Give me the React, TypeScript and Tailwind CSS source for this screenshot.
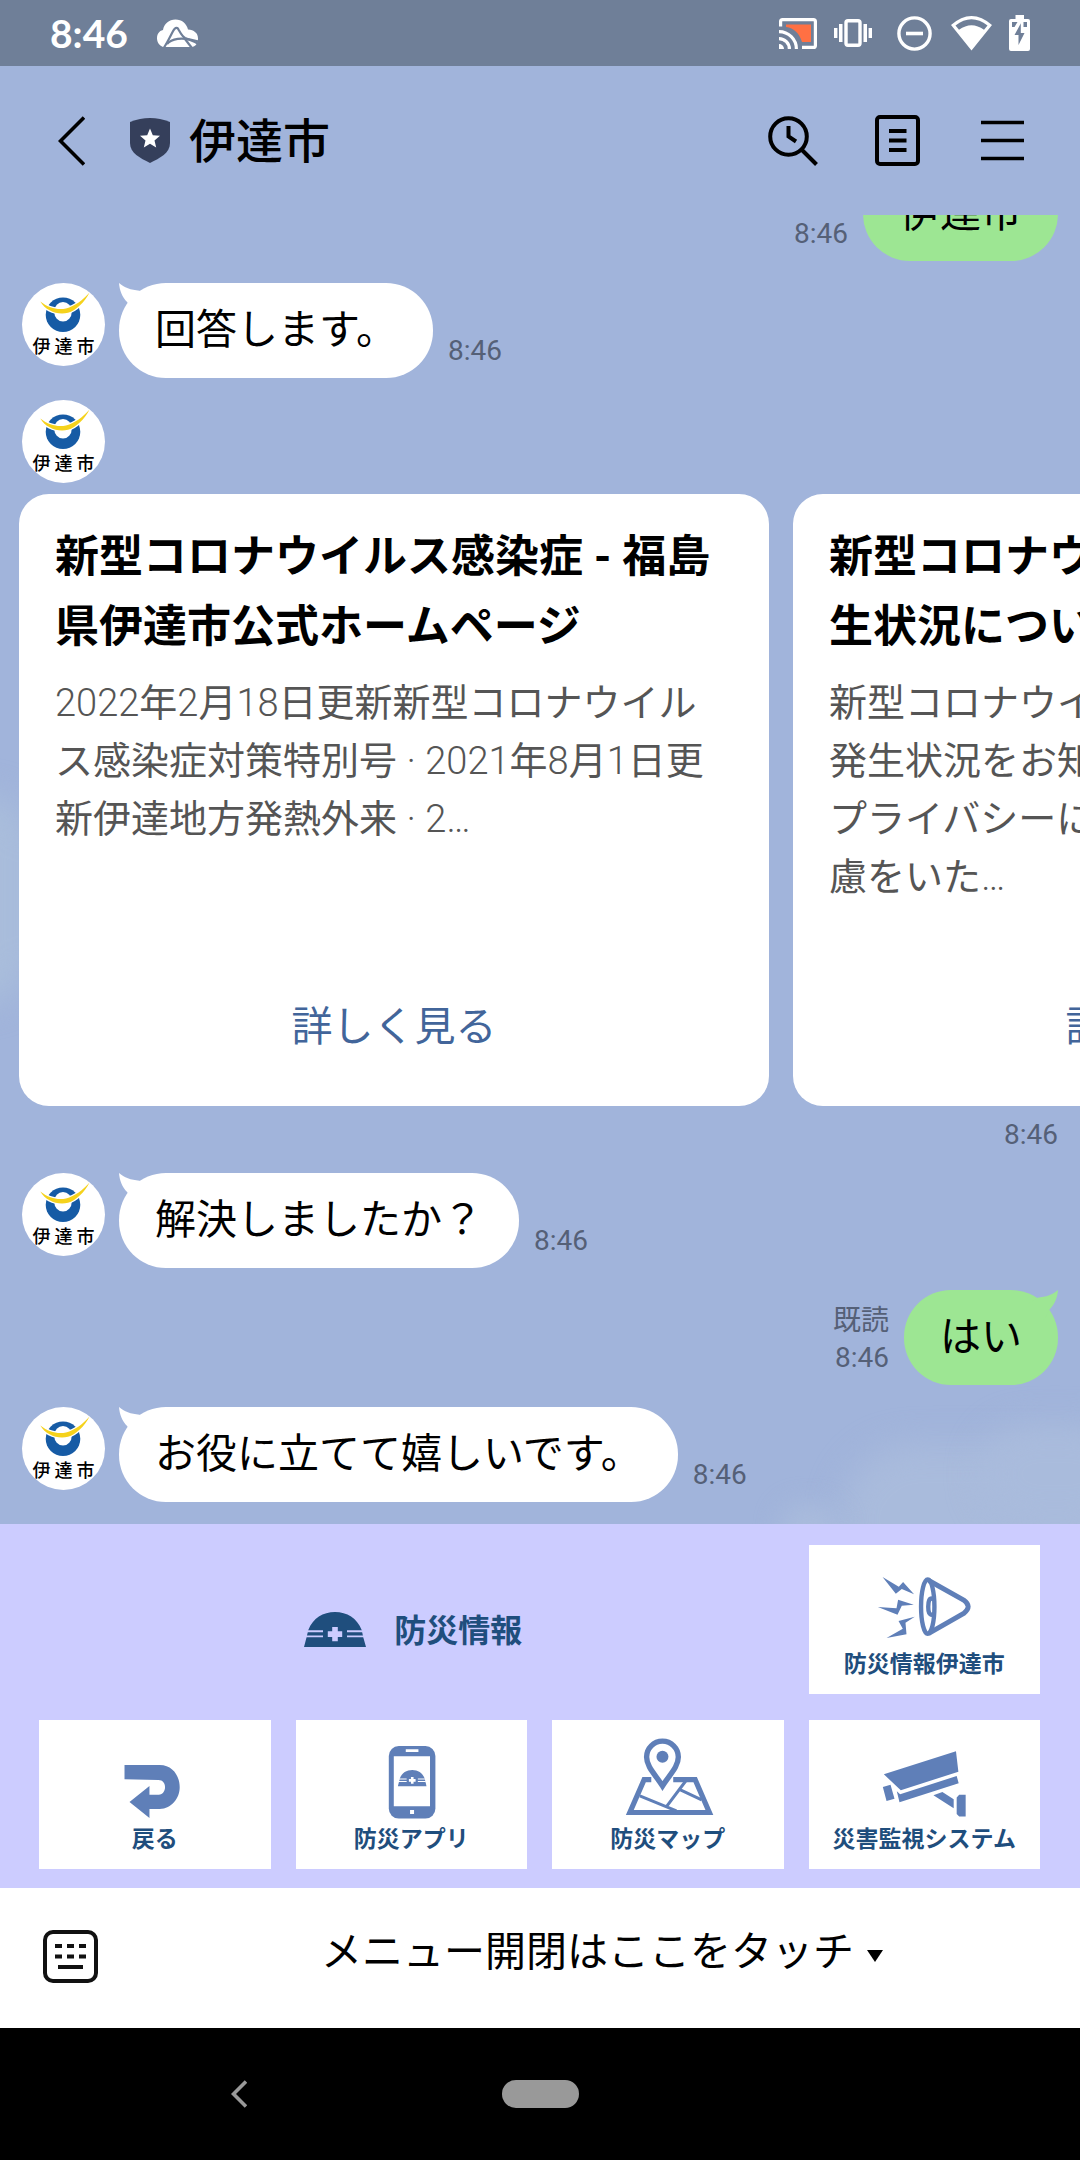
import type { ReactNode } from "react";

const INK = "#1f4e7d";
const TILE_BLUE = "#5f7fb8";

/* ---------- status bar ---------- */

function CloudIcon() {
  return (
    <svg className="h-[28px] w-[41px]" viewBox="0 0 41 28" aria-hidden="true">
      <path
        fill="#fff"
        d="M6 28C2 26.500 0 23 0 19C0 15 2 12 6 11C7 5 12 .5 18.500 .5C25 .5 29.500 4.500 31 10.500C37 11 41 14 41 19.500C41 24 38.500 28 34.500 28Z"
      />
      <g fill="none" stroke="#6f7f98" strokeWidth="2.200">
        <path d="M7 28.500C12 21 15.500 12 17.500 10C19 8.500 20.500 8.500 21.500 10.500C23.500 14 25 17 28 19C32 21 37 22 41.500 25" />
        <path d="M10 25C14 20 24 17 41.500 22.500" />
        <path d="M28 20L34.500 28.500" />
      </g>
    </svg>
  );
}

function CastIcon() {
  return (
    <svg className="h-[31px] w-[38px]" viewBox="0 0 38 31" aria-hidden="true">
      <path fill="#ff7043" d="M7 6.500H32V24H23C20.500 15.500 15 10 7 9Z" />
      <g fill="none" stroke="#fff" strokeWidth="3.200">
        <path d="M1.600 8.500V3.600Q1.600 1.600 3.600 1.600H34.400Q36.400 1.600 36.400 3.600V27.400Q36.400 29.400 34.400 29.400H23" />
        <path d="M0 20.600A10.400 10.400 0 0 1 10.400 31" />
        <path d="M0 13.600A17.400 17.400 0 0 1 17.400 31" />
      </g>
      <path fill="#fff" d="M0 26A5 5 0 0 1 5 31H0Z" />
    </svg>
  );
}

function VibrateIcon() {
  return (
    <svg className="h-[28px] w-[38px]" viewBox="0 0 38 28" aria-hidden="true">
      <rect x="12" y="1.700" width="14" height="24.600" rx="2" fill="none" stroke="#fff" strokeWidth="3.400" />
      <path fill="#fff" d="M5 5H8.500V23H5ZM0 9H3.400V19H0ZM29.500 5H33V23H29.500ZM34.600 9H38V19H34.600Z" />
    </svg>
  );
}

function DoNotDisturbIcon() {
  return (
    <svg className="h-[35px] w-[35px]" viewBox="0 0 35 35" aria-hidden="true">
      <circle cx="17.500" cy="17.500" r="15.600" fill="none" stroke="#fff" strokeWidth="3.400" />
      <path d="M9 17.500H26" stroke="#fff" strokeWidth="3.600" />
    </svg>
  );
}

function WifiIcon() {
  return (
    <svg className="h-[35px] w-[41px]" viewBox="0 0 41 35" aria-hidden="true">
      <path fill="#fff" fillRule="evenodd" d="M0 9Q20.500 -9 41 9L20.500 34.500ZM4.500 9.500L8 13.800Q20.500 4.500 33 13.800L36.500 9.500Q20.500 -3 4.500 9.500Z" />
    </svg>
  );
}

function BatteryIcon() {
  return (
    <svg className="h-[36px] w-[21px]" viewBox="0 0 21 36" aria-hidden="true">
      <path fill="#fff" d="M6.500 0H15V4H19Q21 4 21 6V34Q21 36 19 36H2Q0 36 0 34V6Q0 4 2 4H6.500Z" />
      <path fill="#6f7f98" d="M12 8L5.500 20H9.500V30L15.500 18H11.800V8ZM3 7H8.500L5.500 12H3ZM14.500 7H18V12H14.500Z" />
    </svg>
  );
}

/* ---------- header icons ---------- */

function BackIcon() {
  return (
    <svg className="h-[50px] w-[27px]" viewBox="0 0 27 50" aria-hidden="true">
      <path d="M26 1.500L2.500 25L26 48.500" fill="none" stroke="#000" strokeWidth="3.600" />
    </svg>
  );
}

function ShieldIcon() {
  return (
    <svg className="h-[45px] w-[40px]" viewBox="0 0 40 45" aria-hidden="true">
      <path fill="#353f5b" d="M0 4Q20 -4 40 4V25C40 35 30 40 20 45C10 40 0 35 0 25Z" />
      <path fill="#fff" d="M20 10.500L22.800 17.200L30 17.800L24.500 22.500L26.200 29.500L20 25.800L13.800 29.500L15.500 22.500L10 17.800L17.200 17.200Z" />
    </svg>
  );
}

function SearchClockIcon() {
  return (
    <svg className="h-[50px] w-[50px]" viewBox="0 0 50 50" fill="none" stroke="#000" aria-hidden="true">
      <circle cx="20.500" cy="20.500" r="18.300" strokeWidth="4" />
      <path d="M33.500 33.500L48.500 48.500" strokeWidth="4" />
      <path d="M20.500 10V20.500L28 25.500" strokeWidth="4" />
    </svg>
  );
}

function NoteIcon() {
  return (
    <svg className="h-[51px] w-[45px]" viewBox="0 0 45 51" fill="none" stroke="#000" aria-hidden="true">
      <rect x="2" y="2" width="41" height="47" rx="3" strokeWidth="4" />
      <path d="M14 16H31.500M14 25.500H31.500M14 35H31.500" strokeWidth="4" />
    </svg>
  );
}

function MenuIcon() {
  return (
    <svg className="h-[41px] w-[43px]" viewBox="0 0 43 41" stroke="#000" strokeWidth="3.600" aria-hidden="true">
      <path d="M0 2.500H43M0 20.500H43M0 38.500H43" />
    </svg>
  );
}

/* ---------- chat ---------- */

function Avatar() {
  return (
    <div className="flex size-[83px] shrink-0 flex-col items-center overflow-hidden rounded-full bg-white">
      <svg className="h-[53px] w-[83px] shrink-0" viewBox="0 0 83 53" aria-hidden="true">
        <circle cx="41" cy="31.800" r="17.300" fill="#165ba5" />
        <ellipse cx="41" cy="28.700" rx="8.800" ry="9.800" fill="#fff" />
        <path
          d="M18.300 18.500C27 25.500 36 27 44 25.500C53 23 61 17 67.500 9.500C63 19 54 27.500 46 29.800C35 32 24 28 18.300 18.500Z"
          fill="#f5d21c"
          stroke="#fff"
          strokeWidth="2.600"
          paintOrder="stroke"
        />
      </svg>
      <div className="flex gap-1 text-[18px] leading-[22px] font-medium text-black">
        <span>伊</span>
        <span>達</span>
        <span>市</span>
      </div>
    </div>
  );
}

function Stamp({ read = false }: { read?: boolean }) {
  return (
    <div className="flex flex-col pb-[9px] text-right text-[28px] leading-[37px] text-[#556077]">
      {read && <span>既読</span>}
      <time>8:46</time>
    </div>
  );
}

function Bubble({ children, mine = false, tail = true }: { children: ReactNode; mine?: boolean; tail?: boolean }) {
  return (
    <div
      className={`relative rounded-[47px] px-9 py-[18px] text-[41px] leading-[59px] whitespace-nowrap text-black ${
        mine ? "bg-[#9de693]" : "bg-white"
      }`}
    >
      {tail && (
        <svg
          className={`absolute top-0 h-[32px] w-[32px] ${mine ? "right-0 -scale-x-100" : "left-0"}`}
          viewBox="0 0 32 32"
          aria-hidden="true"
        >
          <path d="M0 0C5 4.500 12 7 20.500 7.700L30 14L14 30L8.300 19.300C3 14 .5 7 0 0Z" fill={mine ? "#9de693" : "#fff"} />
        </svg>
      )}
      {children}
    </div>
  );
}

function Incoming({ children }: { children: ReactNode }) {
  return (
    <div className="flex items-start pl-[22px]">
      <Avatar />
      <div className="ml-[14px] flex items-end gap-[15px]">
        <Bubble>{children}</Bubble>
        <Stamp />
      </div>
    </div>
  );
}

function Outgoing({ children, read = false, tail = true }: { children: ReactNode; read?: boolean; tail?: boolean }) {
  return (
    <div className="flex items-end justify-end gap-[15px] pr-[22px]">
      <Stamp read={read} />
      <Bubble mine tail={tail}>
        {children}
      </Bubble>
    </div>
  );
}

/* Latin digits and punctuation are set light, Japanese text regular. */
function MixedLine({ text }: { text: string }) {
  return (
    <span className="block">
      {text.split(/([0-9·…]+)/).map((run, i) => (
        <span key={i} className={i % 2 === 1 ? "font-light" : "font-normal"}>
          {run}
        </span>
      ))}
    </span>
  );
}

function Card({ title, body }: { title: string[]; body: string[] }) {
  return (
    <article className="flex h-[612px] w-[750px] shrink-0 flex-col rounded-[30px] bg-white px-9 pt-[28px] pb-[50px] whitespace-nowrap">
      <h2 className="text-[44px] leading-[70px] font-bold text-black">
        {title.map((line) => (
          <span key={line} className="block">
            {line}
          </span>
        ))}
      </h2>
      <p className="mt-3 text-[38px] leading-[58px] text-[#555]">
        {body.map((line) => (
          <MixedLine key={line} text={line} />
        ))}
      </p>
      <a href="#detail" className="mt-auto text-center text-[41px] leading-[58px] text-[#42659a]">
        詳しく見る
      </a>
    </article>
  );
}

function CloudBackdrop() {
  return (
    <div className="pointer-events-none absolute inset-0 overflow-hidden" aria-hidden="true">
      <div className="absolute -right-[60px] -bottom-[70px] h-[150px] w-[300px] rounded-full bg-[#a9bbdc] blur-lg" />
      <div className="absolute -right-[50px] bottom-0 h-[100px] w-[150px] rounded-full bg-[#a9bbdc] blur-lg" />
      <div className="absolute right-[240px] -bottom-[30px] h-[50px] w-[60px] rounded-full bg-[#a9bbdc] blur-md" />
      <div className="absolute bottom-[520px] -left-[70px] h-[210px] w-[100px] rounded-full bg-[#a9bddb] blur-lg" />
    </div>
  );
}

/* ---------- rich menu ---------- */

function HelmetShape({ color, gap }: { color: string; gap: string }) {
  return (
    <>
      <path fill={color} d="M4.300 18C9 6 19 0 31 0S53 6 57.700 18L59.300 25.500L62 35H0L2.500 25.500Z" />
      <path fill={gap} d="M2 18.300H19V20.300H2ZM2 23.500H19V25.300H2ZM43 18.300H60V20.300H43ZM43 23.500H60V25.300H43Z" />
      <path fill={gap} d="M28.200 15H33.800V19.300H38.200V25H33.800V29.300H28.200V25H23.800V19.300H28.200Z" />
    </>
  );
}

function Tile({ label, children }: { label: string; children: ReactNode }) {
  return (
    <button type="button" className="flex h-[149px] flex-col items-center bg-white">
      <svg className="h-[106px] w-full" viewBox="0 0 232 106" aria-hidden="true">
        {children}
      </svg>
      <span className="text-[23px] leading-[28px] font-bold whitespace-nowrap text-[#1f4e7d]">{label}</span>
    </button>
  );
}

function RichMenu() {
  return (
    <section className="grid grid-cols-4 gap-x-[25px] gap-y-[26px] bg-[#ccccff] pt-[21px] pr-10 pb-[19px] pl-[39px]">
      <h2 className="col-span-3 flex h-[149px] items-center justify-center gap-7 pt-[23px] pl-1 text-[32px] leading-8 font-bold text-[#1f4e7d]">
        <svg className="mb-1 h-[35px] w-[62px]" viewBox="0 0 62 35" aria-hidden="true">
          <HelmetShape color={INK} gap="#ccccff" />
        </svg>
        防災情報
      </h2>
      <Tile label="防災情報伊達市">
        <g fill="none" stroke={TILE_BLUE}>
          <ellipse cx="119" cy="61.700" rx="6.700" ry="27.200" strokeWidth="4.400" />
          <path d="M120 35.500L155 55Q164 61.500 155 68.500L120 88.500" strokeWidth="5" />
          <path d="M125 54C120 52 119.500 57 119.500 61.700S120 71 125 69.500" strokeWidth="4.400" />
        </g>
        <path
          fill={TILE_BLUE}
          d="M73.700 32L90 41.700L94.300 37L105.300 49.300L93 44L87 48.700ZM69 62L87.700 63.300L89.300 54.700L105 59.700L93 60.700L88.700 69.700ZM77.700 93L94 83.700L89.700 76L106 71.700L96.700 77.700L97.700 89.300Z"
        />
      </Tile>
      <Tile label="戻る">
        <path
          fill={TILE_BLUE}
          d="M85.700 45H121C134 45 141 56 141 67.300C141 78 133 89 121 89H110.700V98L90.700 82L110.700 66V74.700H120C128.500 74 128.500 60 119.700 60L85.700 59.300Z"
        />
      </Tile>
      <Tile label="防災アプリ">
        <rect x="93" y="26" width="46.700" height="72.700" rx="10" fill={TILE_BLUE} />
        <path fill="#fff" d="M98 36.300H134.300V86.300H98ZM110 29.300H122.700V32H110ZM114.300 90H118.300V94H114.300Z" />
        <svg x="102" y="50" width="29" height="16.500" viewBox="0 0 62 35">
          <HelmetShape color={TILE_BLUE} gap="#fff" />
        </svg>
      </Tile>
      <Tile label="防災マップ">
        <g fill="none" stroke={TILE_BLUE}>
          <path d="M99.500 59.700H92.300L78 92.600H157.700L143.500 59.700H121.500" strokeWidth="5.200" />
          <path d="M88 76L124.700 91M114.700 86.700L134 61M128.700 70L150 80" strokeWidth="3" />
        </g>
        <path
          fill="#fff"
          stroke={TILE_BLUE}
          strokeWidth="5.400"
          d="M110.700 66C104 55 94.800 47 94.800 37A15.900 15.900 0 0 1 126.600 37C126.600 47 117.500 55 110.700 66Z"
        />
        <circle cx="110.700" cy="36.700" r="6" fill={TILE_BLUE} />
      </Tile>
      <Tile label="災害監視システム">
        <path
          fill={TILE_BLUE}
          d="M75 54.300L147.300 31.300L149.700 51.700L92 70.300ZM88 71.300L91.300 74.300L148 56L150 63.300L90.700 82.300ZM74 67L81.700 64.700L85.700 78.700L77.700 81ZM124.700 75.300L133.700 72L145 79.300V88.300ZM150.500 74.700H157V96.700H150.500L148 94V77.500Z"
        />
      </Tile>
    </section>
  );
}

function KeyboardIcon() {
  return (
    <svg className="h-[53px] w-[55px]" viewBox="0 0 55 53" aria-hidden="true">
      <rect x="2" y="2" width="51" height="49" rx="8" fill="none" stroke="#111" strokeWidth="4" />
      <path
        fill="#111"
        d="M12 14H19V18H12ZM24 14H31V18H24ZM36 14H43V18H36ZM12 24.500H19V28.500H12ZM24 24.500H31V28.500H24ZM36 24.500H43V28.500H36ZM15 35H40V39H15Z"
      />
    </svg>
  );
}

export default function App() {
  return (
    <div className="flex h-screen flex-col overflow-hidden bg-[#a1b4db] font-['Roboto','Noto_Sans_CJK_JP',sans-serif]" lang="ja">
      <div className="flex h-[66px] shrink-0 items-center bg-[#6f7f98] pr-[50px] pl-[50px]">
        <time className="font-['Lato',sans-serif] text-[39px] leading-[66px] font-bold text-white">8:46</time>
        <div className="ml-[29px]">
          <CloudIcon />
        </div>
        <div className="ml-auto flex items-center">
          <CastIcon />
          <div className="ml-[17px]">
            <VibrateIcon />
          </div>
          <div className="ml-[25px]">
            <DoNotDisturbIcon />
          </div>
          <div className="ml-[19px]">
            <WifiIcon />
          </div>
          <div className="ml-[17px]">
            <BatteryIcon />
          </div>
        </div>
      </div>

      <header className="flex h-[149px] shrink-0 items-center pr-14 pl-[58px]">
        <button type="button" aria-label="戻る" className="mr-[45px]">
          <BackIcon />
        </button>
        <ShieldIcon />
        <h1 className="ml-[19px] pt-[2px] text-[47px] leading-[62px] font-medium text-black">伊達市</h1>
        <button type="button" aria-label="検索" className="ml-auto">
          <SearchClockIcon />
        </button>
        <button type="button" aria-label="ノート" className="ml-[57px]">
          <NoteIcon />
        </button>
        <button type="button" aria-label="メニュー" className="ml-[61px]">
          <MenuIcon />
        </button>
      </header>

      <main className="relative flex min-h-0 flex-1 flex-col justify-end overflow-hidden">
        <CloudBackdrop />
        <div className="relative flex flex-col gap-[22px] pb-[22px]">
          <Outgoing tail={false}>伊達市</Outgoing>
          <Incoming>回答します。</Incoming>
          <div>
            <div className="pl-[22px]">
              <Avatar />
            </div>
            <div className="mt-[11px] flex gap-6 overflow-hidden pl-[19px]">
              <Card
                title={["新型コロナウイルス感染症 - 福島", "県伊達市公式ホームページ"]}
                body={["2022年2月18日更新新型コロナウイル", "ス感染症対策特別号 · 2021年8月1日更", "新伊達地方発熱外来 · 2…"]}
              />
              <Card
                title={["新型コロナウイルス感染症の発", "生状況について"]}
                body={["新型コロナウイルス感染症の", "発生状況をお知らせします。", "プライバシーに十分な配", "慮をいた…"]}
              />
            </div>
            <div className="mt-3 pr-[22px] text-right text-[28px] leading-[33px] text-[#556077]">
              <time>8:46</time>
            </div>
          </div>
          <Incoming>解決しましたか？</Incoming>
          <Outgoing read>はい</Outgoing>
          <Incoming>お役に立てて嬉しいです。</Incoming>
        </div>
      </main>

      <div className="shrink-0">
        <RichMenu />
        <div className="flex h-[140px] items-center bg-white pb-[3px] pl-[43px]">
          <button type="button" aria-label="キーボード">
            <KeyboardIcon />
          </button>
          <button type="button" className="ml-[26px] flex flex-1 items-center justify-center gap-[13px] pb-[9px] text-[41px] leading-[59px] text-black">
            メニュー開閉はここをタッチ
            <svg className="mt-[8px] h-[12px] w-[16px]" viewBox="0 0 16 12" aria-hidden="true">
              <path d="M0 0H16L8 12Z" />
            </svg>
          </button>
        </div>
        <nav className="grid h-[132px] grid-cols-[1fr_auto_1fr] items-center bg-black">
          <button type="button" aria-label="前へ" className="ml-[231px] w-4">
            <svg className="h-[28px] w-[16px]" viewBox="0 0 16 28" aria-hidden="true">
              <path d="M15 1.500L2.500 14L15 26.500" fill="none" stroke="#999" strokeWidth="3.600" />
            </svg>
          </button>
          <button type="button" aria-label="ホーム" className="h-[28px] w-[77px] rounded-full bg-[#999]" />
        </nav>
      </div>
    </div>
  );
}
